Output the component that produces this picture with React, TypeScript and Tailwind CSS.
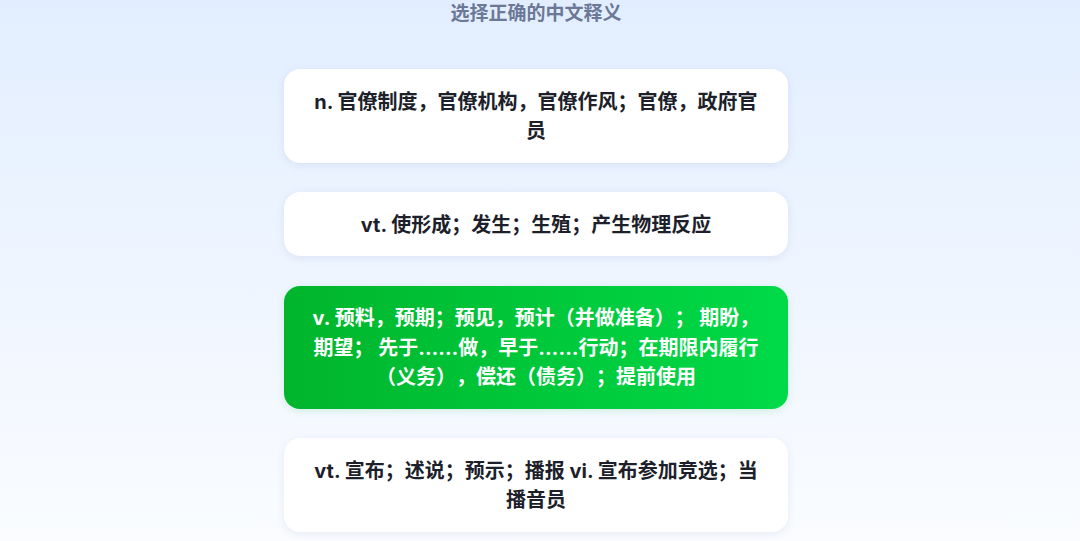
const options = [
  { text: 'n. 官僚制度，官僚机构，官僚作风；官僚，政府官员', selected: false },
  { text: 'vt. 使形成；发生；生殖；产生物理反应', selected: false },
  {
    text: 'v. 预料，预期；预见，预计（并做准备）； 期盼，期望； 先于……做，早于……行动；在期限内履行（义务），偿还（债务）；提前使用',
    selected: true,
  },
  { text: 'vt. 宣布；述说；预示；播报 vi. 宣布参加竞选；当播音员', selected: false },
];

export default function App() {
  return (
    <div
      className="min-h-[541px] w-full bg-gradient-to-b from-[#e2eeff] to-[#fafcff] flex flex-col items-center pr-[8px] [text-spacing-trim:space-all]"
      style={{ fontFamily: 'Inter, "Noto Sans CJK SC", sans-serif' }}
    >
      <h2 className="text-[19px] leading-[28px] font-bold text-[#6b7896]">选择正确的中文释义</h2>

      {/* options */}
      <div className="mt-[41px] w-[504px] flex flex-col gap-[29.5px] pb-[9px]">
        {options.map((opt, i) => (
          <button
            key={i}
            className={
              opt.selected
                ? 'rounded-2xl px-[22px] pt-[18.5px] pb-[16px] bg-gradient-to-r from-[#00b52c] to-[#00da48] text-white text-[20px] leading-[29.5px] font-bold text-center shadow-[0_2px_8px_rgba(0,180,60,0.15)]'
                : 'rounded-2xl px-[22px] pt-[18.5px] pb-[16px] bg-white text-[#1d1f2b] text-[20px] leading-[29.5px] font-bold text-center shadow-[0_2px_8px_rgba(60,90,150,0.10)]'
            }
          >
            {opt.text}
          </button>
        ))}
      </div>
    </div>
  );
}
